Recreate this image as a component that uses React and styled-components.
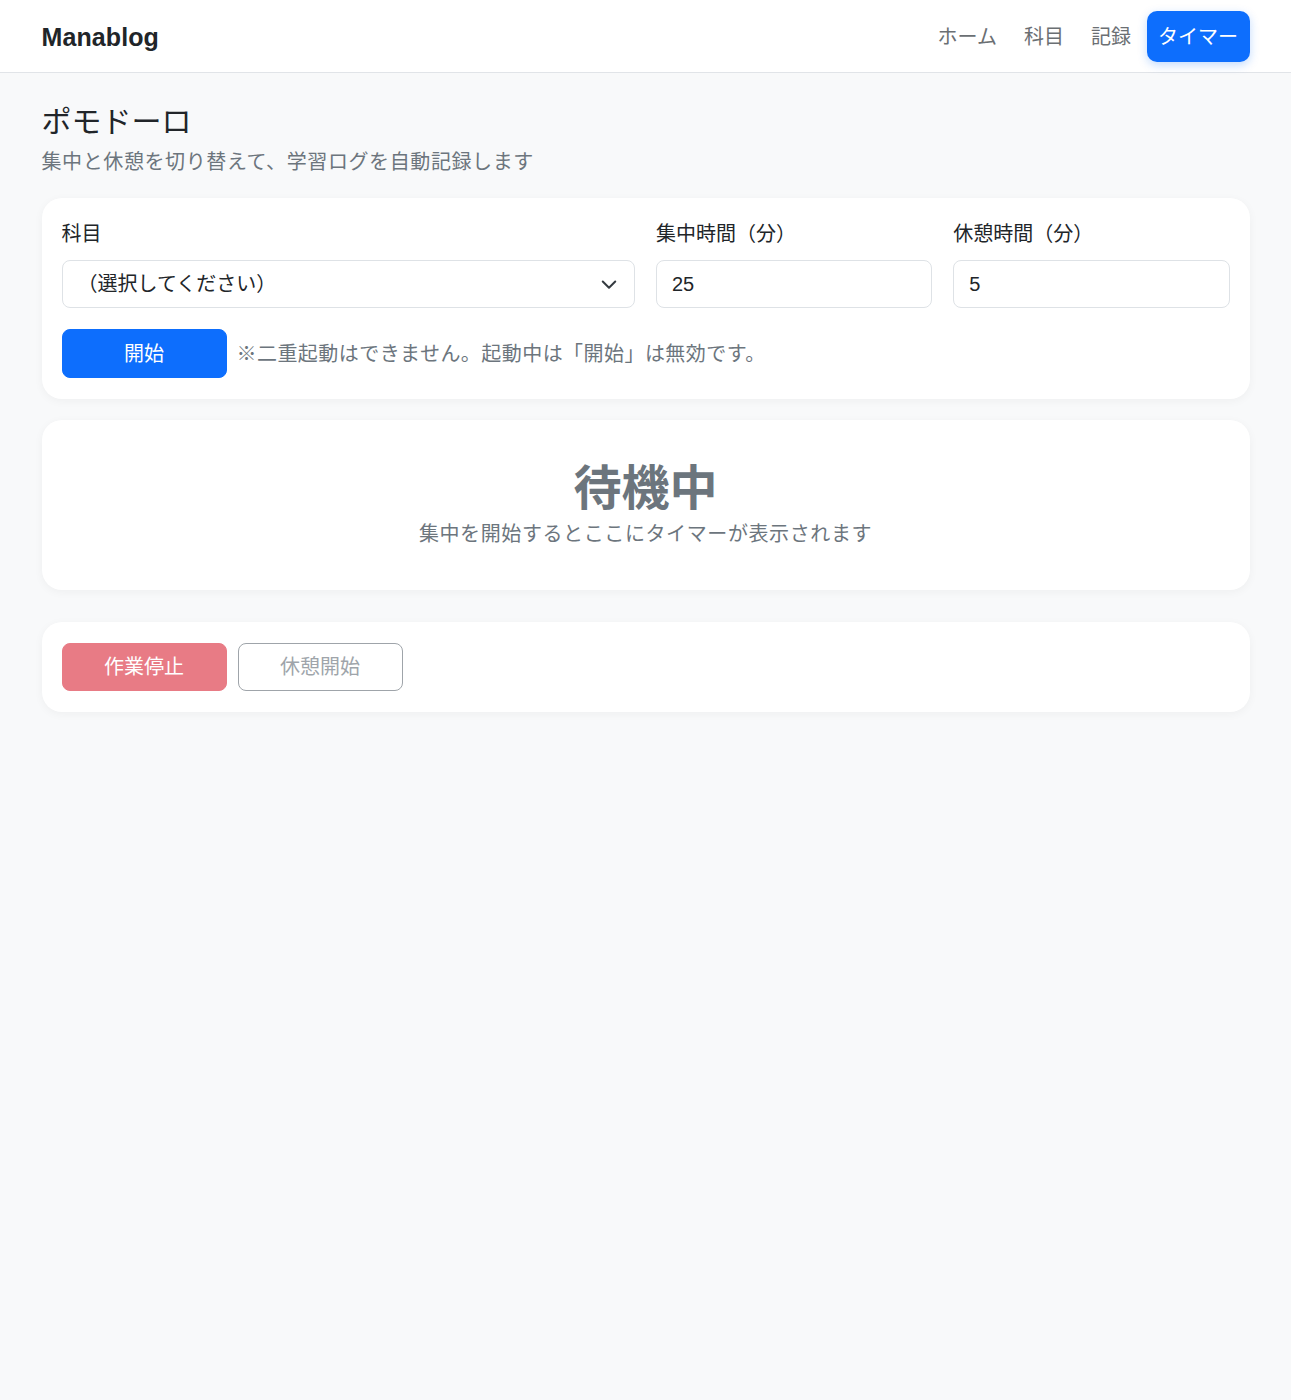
import React from 'react';
import styled, { createGlobalStyle } from 'styled-components';

const GlobalStyle = createGlobalStyle`
  * { box-sizing: border-box; }
  html, body {
    margin: 0;
    padding: 0;
    background: #f8f9fa;
    color: #212529;
    font-family: "Liberation Sans", "Noto Sans CJK JP", sans-serif;
    font-size: 20px;
    line-height: 1.5;
  }
`;

const Navbar = styled.header`
  background: #fff;
  border-bottom: 1px solid #e1e4e8;
  height: 73px;
`;

const Container = styled.div`
  max-width: 1208px;
  margin: 0 auto;
`;

const NavInner = styled(Container)`
  height: 72px;
  padding-top: 1px;
  display: flex;
  align-items: center;
  justify-content: space-between;
`;

const Brand = styled.a`
  font-size: 25px;
  font-weight: 700;
  color: #212529;
  text-decoration: none;
  letter-spacing: 0.1px;
  margin-top: 2px;
`;

const NavList = styled.nav`
  display: flex;
  align-items: center;
  gap: 4px;
`;

const NavLink = styled.a`
  display: block;
  padding: 10.5px 11.5px;
  border-radius: 10px;
  font-size: 20px;
  line-height: 30px;
  text-decoration: none;
  color: ${({ active }) => (active ? '#fff' : '#6b6f73')};
  background: ${({ active }) => (active ? '#0d6efd' : 'transparent')};
  box-shadow: ${({ active }) => (active ? '0 3px 10px rgba(13, 110, 253, 0.25)' : 'none')};
`;

const Main = styled(Container)`
  padding-top: 31px;
`;

const Title = styled.h1`
  margin: 0 0 7px;
  font-size: 30px;
  font-weight: 400;
  line-height: 36px;
`;

const Lead = styled.p`
  margin: 0 0 21px;
  color: #6c757d;
  line-height: 30px;
  letter-spacing: 0.6px;
`;

const Card = styled.section`
  background: #fff;
  border-radius: 20px;
  box-shadow: 0 2px 10px rgba(0, 0, 0, 0.045);
  padding: ${({ pad }) => pad || '21px 20px'};
  margin-bottom: ${({ mb }) => mb || '21px'};
  text-align: ${({ center }) => (center ? 'center' : 'left')};
`;

const FieldGrid = styled.div`
  display: grid;
  grid-template-columns: minmax(0, 573fr) minmax(0, 276fr) minmax(0, 276fr);
  column-gap: 21px;
`;

const Label = styled.label`
  display: block;
  line-height: 30px;
  margin-bottom: 11px;
`;

const Field = styled.div`
  height: 48px;
  border: 1px solid #dee2e6;
  border-radius: 8px;
  background: #fff;
  padding: 0 15px;
  display: flex;
  align-items: center;
  justify-content: space-between;
  line-height: 30px;
  color: #212529;
`;

const Actions = styled.div`
  display: flex;
  align-items: center;
  gap: ${({ gap }) => gap || '10px'};
  margin-top: ${({ mt }) => mt || '0'};
`;

const Button = styled.button`
  width: 165px;
  height: ${({ h }) => h || '48px'};
  border-radius: 8px;
  font-family: inherit;
  font-size: 20px;
  line-height: 30px;
  border: 1px solid ${({ border }) => border};
  background: ${({ bg }) => bg};
  color: ${({ fg }) => fg};
  opacity: ${({ disabled }) => (disabled ? 0.65 : 1)};
  padding: 0;
`;

const Note = styled.span`
  color: #6c757d;
  letter-spacing: 0.45px;
`;

const StatusTitle = styled.div`
  font-size: 48px;
  font-weight: 700;
  line-height: 60px;
  color: #6c757d;
`;

const StatusText = styled.div`
  color: #6c757d;
  line-height: 30px;
  letter-spacing: 0.6px;
`;

const Chevron = () => (
  <svg width="20" height="20" viewBox="0 0 16 16">
    <path d="m3 6 5 5 5-5" fill="none" stroke="#343a40" strokeWidth="1.6" strokeLinecap="round" strokeLinejoin="round" />
  </svg>
);

export default function App() {
  return (
    <>
      <GlobalStyle />
      <Navbar>
        <NavInner>
          <Brand href="#">Manablog</Brand>
          <NavList>
            <NavLink href="#">ホーム</NavLink>
            <NavLink href="#">科目</NavLink>
            <NavLink href="#">記録</NavLink>
            <NavLink href="#" active>タイマー</NavLink>
          </NavList>
        </NavInner>
      </Navbar>
      <Main>
        <Title>ポモドーロ</Title>
        <Lead>集中と休憩を切り替えて、学習ログを自動記録します</Lead>

        <Card>
          <FieldGrid>
            <div>
              <Label>科目</Label>
              <Field>
                <span>（選択してください）</span>
                <Chevron />
              </Field>
            </div>
            <div>
              <Label>集中時間（分）</Label>
              <Field>25</Field>
            </div>
            <div>
              <Label>休憩時間（分）</Label>
              <Field>5</Field>
            </div>
          </FieldGrid>
          <Actions mt="21px">
            <Button h="49px" bg="#0d6efd" fg="#fff" border="#0d6efd">開始</Button>
            <Note>※二重起動はできません。起動中は「開始」は無効です。</Note>
          </Actions>
        </Card>

        <Card center pad="39px 20px 41px" mb="32px">
          <StatusTitle>待機中</StatusTitle>
          <StatusText>集中を開始するとここにタイマーが表示されます</StatusText>
        </Card>

        <Card>
          <Actions gap="11px">
            <Button disabled bg="#dc3545" fg="#fff" border="#dc3545">作業停止</Button>
            <Button disabled bg="#fff" fg="#6c757d" border="#6c757d">休憩開始</Button>
          </Actions>
        </Card>
      </Main>
    </>
  );
}
